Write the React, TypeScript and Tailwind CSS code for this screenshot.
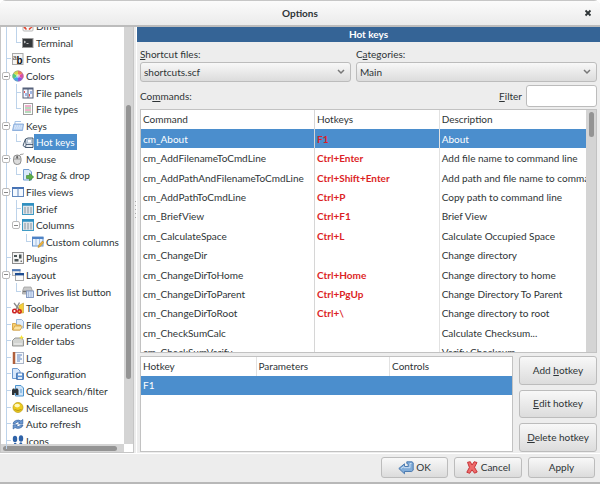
import { useState } from "react";
import type { ReactNode } from "react";
import clsx from "clsx";

/* 12x12 drawings for the tree */
const icons: Record<string, ReactNode> = {
  differ: (
    <>
      <rect x="1" y="1" width="10" height="10" rx="1" fill="#fafafa" stroke="#b9b9b9" />
      <path d="M4.5 5.5L2.5 7.5l2 2M7 5l2.5 2L7 9.500" fill="none" stroke="#e0452f" strokeWidth="1.600" />
    </>
  ),
  terminal: (
    <>
      <rect x="0.5" y="1.5" width="10.500" height="9" fill="#34373a" stroke="#9a9a9a" />
      <path d="M2 4l1.500 1L2 6" fill="none" stroke="#fff" strokeWidth="0.8" />
      <path d="M4.500 6.500h2" stroke="#ddd" strokeWidth="0.8" />
    </>
  ),
  fonts: (
    <>
      <rect x="0.5" y="0.5" width="10.500" height="11" fill="#f6f6f6" stroke="#a9a9a9" />
      <text x="0.800" y="6.500" fontSize="7" fill="#444" fontFamily="Liberation Sans, sans-serif">a</text>
      <text x="4.500" y="10.500" fontSize="10" fontWeight="bold" fill="#111" fontFamily="Liberation Sans, sans-serif">b</text>
    </>
  ),
  colors: (
    <>
      <path d="M6 6V.5A5.500 5.500 0 0 1 10.800 3.200z" fill="#ef7d5a" />
      <path d="M6 6l4.800-2.800A5.500 5.500 0 0 1 10.800 8.800z" fill="#e24ba0" />
      <path d="M6 6l4.800 2.800A5.500 5.500 0 0 1 6 11.500z" fill="#8a55e0" />
      <path d="M6 6v5.500A5.500 5.500 0 0 1 1.200 8.800z" fill="#42a5ee" />
      <path d="M6 6L1.200 8.800A5.500 5.500 0 0 1 1.200 3.200z" fill="#4fcf7a" />
      <path d="M6 6L1.200 3.200A5.500 5.500 0 0 1 6 .5z" fill="#d5d84a" />
      <circle cx="6" cy="6" r="2" fill="#fff" opacity="0.5" />
      <circle cx="6" cy="6" r="5.200" fill="none" stroke="#8f8f9f" strokeWidth="0.5" />
    </>
  ),
  panels: (
    <>
      <rect x="0.500" y="0.500" width="11" height="11" fill="#55607a" />
      <rect x="1.500" y="2.500" width="4" height="8" fill="#f4f6ff" />
      <rect x="6.500" y="2.500" width="4" height="8" fill="#f4f6ff" />
      <path d="M2.500 4v2M7.500 7v2.500" stroke="#e05050" />
      <path d="M4 6v3M9 4v3" stroke="#4a76c9" />
    </>
  ),
  types: (
    <>
      <rect x="1.500" y="0.500" width="9" height="11" fill="#fcfcfc" stroke="#9d9d9d" />
      <path d="M3 3h6M3 7h6" stroke="#e0609a" />
      <path d="M3 5h6M3 9h6" stroke="#6fb97a" />
    </>
  ),
  keys: (
    <>
      <path d="M3 4V1.500h6" fill="none" stroke="#a8c4e6" />
      <path d="M2 4h9.500l-1 6.500H.5z" fill="#b4cef0" stroke="#7ba2d4" strokeWidth="0.8" />
      <path d="M2.500 6h8M2 8h8" stroke="#f1f7ff" strokeDasharray="1.500 0.600" />
    </>
  ),
  hotkeys: (
    <>
      <path d="M3.500 3L1 9.500l2.500 2h7.500V2H6z" fill="#e9eef5" stroke="#33475f" strokeWidth="0.900" />
      <path d="M3.500 3L4 8.500l-.5 3M4 8.500h7" fill="none" stroke="#33475f" strokeWidth="0.800" />
      <path d="M5.500 3.500h4v3.500h-4z" fill="#fff" stroke="#8ba2bd" strokeWidth="0.600" />
    </>
  ),
  mouse: (
    <>
      <path d="M7.500 2.500C8.500.5 10 2 11.500.8" fill="none" stroke="#8b8b8b" />
      <rect x="1.500" y="2" width="7.500" height="9.500" rx="3.500" fill="#dcdcdc" stroke="#777" strokeWidth="0.800" />
      <path d="M2 6h6.500M5.200 2v4" stroke="#888" strokeWidth="0.800" />
      <rect x="4.200" y="3" width="2" height="2.500" rx="1" fill="#666" />
    </>
  ),
  drag: (
    <>
      <path d="M1.500.5h5.500l2.500 2.500v8h-8z" fill="#d9e9fb" stroke="#6f9cd0" />
      <path d="M4.500 6.500h3V4.300l4.200 3.700-4.200 3.700V9.500h-3z" fill="#5db04a" stroke="#357f2a" strokeWidth="0.600" />
    </>
  ),
  views: (
    <>
      <rect x="0.500" y="1.500" width="11" height="9" fill="#f4f9ff" stroke="#6288bd" />
      <path d="M0 2h12" stroke="#4672b4" strokeWidth="2" />
      <path d="M6 2v9" stroke="#6288bd" />
    </>
  ),
  brief: (
    <>
      <rect x="0.500" y="0.500" width="11" height="11" fill="#dfe5ea" stroke="#409bc4" />
      <path d="M0 1.500h12" stroke="#2f8fc0" strokeWidth="2.500" />
      <path d="M3 4v6.500M6 4v6.500M9 4v6.500" stroke="#84929d" />
    </>
  ),
  custom: (
    <>
      <rect x="0.500" y="1" width="10.500" height="9" fill="#e9f2fd" stroke="#6794cb" />
      <path d="M0 2h11.500" stroke="#4e83c6" strokeWidth="2" />
      <path d="M4 3v7M7.500 3v7" stroke="#a2bfe2" />
      <path d="M6 11.500l.8-2.500L10.500 5l1.300 1.500L8 10.800z" fill="#edb43c" stroke="#b07b1d" strokeWidth="0.500" />
    </>
  ),
  plugins: (
    <>
      <rect x="0.500" y="0.500" width="11" height="11" fill="#f3f3f3" stroke="#8d8d8d" />
      <path d="M2 3h3v2H2zM7 2.500h2.500v4H7zM2.500 7h4v2.500h-4z" fill="#4b5556" />
      <path d="M8.500 8.500h1.500V10H8.500z" fill="#777" />
    </>
  ),
  layout: (
    <>
      <rect x="0.500" y="0.500" width="7.500" height="6" fill="#eee" stroke="#b5b5b5" />
      <path d="M0 1.200h8.500" stroke="#4d79b8" strokeWidth="2" />
      <rect x="3.500" y="4.500" width="8" height="7" fill="#fafafa" stroke="#aaa" />
      <path d="M3 5.200h9" stroke="#1e4d91" strokeWidth="2.400" />
    </>
  ),
  drives: (
    <>
      <path d="M2 1h7l1.500 4v3h-10V5z" fill="#c9c9c9" stroke="#999" strokeWidth="0.700" />
      <path d="M1 5.500h9" stroke="#777" strokeWidth="1.500" />
      <rect x="4.500" y="5" width="7" height="6.500" fill="#d2e0f4" stroke="#7d93bd" strokeWidth="0.900" />
      <path d="M6.500 5v6M9 5v6" stroke="#95a9cf" strokeWidth="0.700" />
    </>
  ),
  toolbar: (
    <>
      <path d="M7 3.500l4.500-2.500v10H6z" fill="#f4cf3c" stroke="#b79520" strokeWidth="0.500" />
      <path d="M2 1l5.500 7M7.500.5L3.500 8" stroke="#888" strokeWidth="1.300" />
      <circle cx="2.500" cy="9" r="1.800" fill="none" stroke="#cc2020" strokeWidth="1.500" />
      <circle cx="7.500" cy="9.500" r="1.700" fill="none" stroke="#cc2020" strokeWidth="1.500" />
    </>
  ),
  fileops: (
    <>
      <path d="M4.500.5h5l2 2V9h-7z" fill="#deebfb" stroke="#7fa4d2" strokeWidth="0.800" />
      <path d="M.5 4.500h3l1 1.500h4l-.5 5H.5z" fill="#f6cf73" stroke="#cf9a34" strokeWidth="0.800" />
      <path d="M.8 11l2-4h7.500l-2 4z" fill="#fbe3a2" stroke="#cf9a34" strokeWidth="0.700" />
    </>
  ),
  tabs: (
    <>
      <path d="M.5 11V5.500L3 3h7l1.500 2.500V11z" fill="#d3d5d2" stroke="#8d8f8c" strokeWidth="0.900" />
      <path d="M2 9h8" stroke="#f2f2f2" />
      <path d="M9.500 0l.8 1.700 1.700.8-1.700.8-.8 1.700-.8-1.700L7 2.500l1.700-.8z" fill="#f4e23c" />
    </>
  ),
  log: (
    <>
      <rect x="2.500" y="0.500" width="9" height="11" fill="#f7f9fc" stroke="#a9b4c6" />
      <path d="M2 0v12" stroke="#b0603c" strokeWidth="2.500" />
      <path d="M5 3h5M5 5h3.500M5 7h5M5 9h3" stroke="#5c82bd" />
    </>
  ),
  config: (
    <>
      <path d="M.5.500h5L8 3v7.500H.5z" fill="#d7e7fa" stroke="#6b98ce" />
      <rect x="4.500" y="5" width="7" height="6.500" rx="0.500" fill="#5d93d3" stroke="#3d6ba8" strokeWidth="0.800" />
      <rect x="6" y="5.500" width="4" height="2" fill="#fff" />
      <rect x="6" y="9" width="4" height="2" fill="#dfe9f5" />
    </>
  ),
  quick: (
    <>
      <path d="M3.500.500h5.500l2.500 2.500v8h-8z" fill="#cfe4f8" stroke="#4d95cf" />
      <path d="M0 5l1-1.500h1.500L3 5l1-1.500h1.500L6.500 5v5H4V8H2.500v2H0z" fill="#2d3439" />
      <path d="M8 5h2M8 7h2" stroke="#5c9bd0" />
    </>
  ),
  misc: (
    <>
      <circle cx="6" cy="5.500" r="5" fill="#ecca1e" stroke="#b99a12" strokeWidth="0.700" />
      <ellipse cx="5.200" cy="3.600" rx="2.800" ry="1.800" fill="#fff8bd" />
      <path d="M2.500 7.500q3.500 2 7 0" fill="none" stroke="#a98b10" strokeWidth="0.800" />
    </>
  ),
  refresh: (
    <>
      <path d="M1 5.500A5 4 0 0 1 9 3l1.800-1.500v4.300H6.500L8 4.500A3.500 3 0 0 0 3.200 5.500z" fill="#6d9ad2" stroke="#2f5f9f" strokeWidth="0.700" />
      <path d="M11 7A5 4 0 0 1 3 9.500L1.200 11V6.800h4.300L4 8A3.500 3 0 0 0 8.800 7z" fill="#6d9ad2" stroke="#2f5f9f" strokeWidth="0.700" />
    </>
  ),
  feet: (
    <>
      <ellipse cx="3" cy="4" rx="2.200" ry="3.300" fill="#2f63a8" />
      <ellipse cx="3.200" cy="9.500" rx="1.500" ry="1.800" fill="#2f63a8" />
      <ellipse cx="9" cy="3.500" rx="2.200" ry="3.200" fill="#2f63a8" />
      <ellipse cx="8.800" cy="9" rx="1.500" ry="1.800" fill="#2f63a8" />
    </>
  ),
};

type Node = {
  label: string;
  icon: string;
  level: number;
  last?: boolean;
  open?: boolean;
};

const nodes: Node[] = [
  { label: "Differ", icon: "differ", level: 1 },
  { label: "Terminal", icon: "terminal", level: 1, last: true },
  { label: "Fonts", icon: "fonts", level: 0 },
  { label: "Colors", icon: "colors", level: 0, open: true },
  { label: "File panels", icon: "panels", level: 1 },
  { label: "File types", icon: "types", level: 1, last: true },
  { label: "Keys", icon: "keys", level: 0, open: true },
  { label: "Hot keys", icon: "hotkeys", level: 1, last: true },
  { label: "Mouse", icon: "mouse", level: 0, open: true },
  { label: "Drag & drop", icon: "drag", level: 1, last: true },
  { label: "Files views", icon: "views", level: 0, open: true },
  { label: "Brief", icon: "brief", level: 1 },
  { label: "Columns", icon: "brief", level: 1, last: true, open: true },
  { label: "Custom columns", icon: "custom", level: 2, last: true },
  { label: "Plugins", icon: "plugins", level: 0 },
  { label: "Layout", icon: "layout", level: 0, open: true },
  { label: "Drives list button", icon: "drives", level: 1, last: true },
  { label: "Toolbar", icon: "toolbar", level: 0 },
  { label: "File operations", icon: "fileops", level: 0 },
  { label: "Folder tabs", icon: "tabs", level: 0 },
  { label: "Log", icon: "log", level: 0 },
  { label: "Configuration", icon: "config", level: 0 },
  { label: "Quick search/filter", icon: "quick", level: 0 },
  { label: "Miscellaneous", icon: "misc", level: 0 },
  { label: "Auto refresh", icon: "refresh", level: 0 },
  { label: "Icons", icon: "feet", level: 0 },
];

const commands = [
  ["cm_About", "F1", "About"],
  ["cm_AddFilenameToCmdLine", "Ctrl+Enter", "Add file name to command line"],
  ["cm_AddPathAndFilenameToCmdLine", "Ctrl+Shift+Enter", "Add path and file name to command line"],
  ["cm_AddPathToCmdLine", "Ctrl+P", "Copy path to command line"],
  ["cm_BriefView", "Ctrl+F1", "Brief View"],
  ["cm_CalculateSpace", "Ctrl+L", "Calculate Occupied Space"],
  ["cm_ChangeDir", "", "Change directory"],
  ["cm_ChangeDirToHome", "Ctrl+Home", "Change directory to home"],
  ["cm_ChangeDirToParent", "Ctrl+PgUp", "Change Directory To Parent"],
  ["cm_ChangeDirToRoot", "Ctrl+\\", "Change directory to root"],
  ["cm_CheckSumCalc", "", "Calculate Checksum..."],
  ["cm_CheckSumVerify", "", "Verify Checksum"],
];

const buttonClass =
  "flex items-center justify-center rounded-[3px] border border-[#bcbcbc] bg-gradient-to-b from-[#f8f8f8] to-[#dcdcdc] whitespace-nowrap";

function TreeRow({ node, selected, onSelect }: { node: Node; selected: boolean; onSelect: () => void }) {
  const cells = Array.from({ length: node.level + 1 }, (_, i) => i);

  return (
    <li role="treeitem" aria-selected={selected} className="flex min-h-0 items-center">
      {cells.map((i) => {
        const own = i === node.level;
        const line = own || i === 0;
        return (
          <span key={i} className="relative grid w-[10px] shrink-0 grid-rows-2 self-stretch pl-[5px]">
            <span className={clsx(line && "border-l border-[#bdd3ea]", own && "border-b")} />
            <span className={clsx(line && !(own && node.last) && "border-l border-[#bdd3ea]")} />
            {own && node.open && (
              <button
                aria-label={`Collapse ${node.label}`}
                className="absolute inset-0 m-auto flex size-2 items-center justify-center rounded-[2px] border border-[#bababa] bg-white"
              >
                <span className="h-px w-1 bg-[#888]" />
              </button>
            )}
          </span>
        );
      })}
      <svg viewBox="0 0 12 12" className="ml-px size-3 shrink-0">
        {icons[node.icon]}
      </svg>
      <button
        onClick={onSelect}
        className={clsx("h-4 px-[2px] leading-4 whitespace-nowrap", selected && "bg-[#4b8ecd] text-white")}
      >
        {node.label}
      </button>
    </li>
  );
}

function Combo({ id, label, value }: { id: string; label: ReactNode; value: string }) {
  return (
    <div className="flex flex-col">
      <label htmlFor={id} className="h-4 leading-4">
        {label}
      </label>
      <div className="relative">
        <select
          id={id}
          className="h-5 w-full appearance-none rounded-[3px] border border-[#bcbcbc] bg-gradient-to-b from-[#f8f8f8] to-[#dcdcdc] px-[3px] outline-none"
        >
          <option>{value}</option>
        </select>
        <svg viewBox="0 0 8 6" className="pointer-events-none absolute top-[7px] right-[6px] h-[6px] w-2">
          <path d="M1 1l3 3 3-3" fill="none" stroke="#777" strokeWidth="1.500" />
        </svg>
      </div>
    </div>
  );
}

export default function App() {
  const [page, setPage] = useState("Hot keys");
  const [command, setCommand] = useState("cm_About");
  const [filter, setFilter] = useState("");

  const rows = commands.filter(([name]) => name.toLowerCase().includes(filter.toLowerCase()));

  return (
    <div className="bg-white">
      <div className="flex h-screen w-full flex-col overflow-hidden rounded-t-md border-b-2 border-[#b8b8b8] bg-[#ededed] font-['Lato','Open_Sans',sans-serif] text-[10px] text-[#2e3436]">
        {/* Title bar */}
        <header className="grid h-[27px] shrink-0 grid-cols-[1fr_auto_1fr] items-center border-t border-b-2 border-t-[#c6c6c6] border-b-[#bcbcbc] bg-gradient-to-b from-[#fbfbfb] to-[#ebebeb]">
          <h1 className="col-start-2 font-bold">Options</h1>
          <button aria-label="Close" className="mr-2 justify-self-end">
            <svg viewBox="0 0 8 8" className="size-2">
              <path d="M1.500 1.500l5 5M6.500 1.500l-5 5" stroke="#2e3436" strokeWidth="1.800" />
            </svg>
          </button>
        </header>

        <div className="flex min-h-0 flex-1">
          {/* Page tree */}
          <nav className="flex w-[134px] shrink-0 flex-col overflow-hidden border-r border-b border-l border-[#c6c6c6] bg-white">
            <div className="flex min-h-0 flex-1">
              <ul role="tree" className="-mt-[9px] grid h-[431px] min-w-0 flex-1 auto-rows-fr overflow-hidden">
                {nodes.map((node) => (
                  <TreeRow
                    key={node.label}
                    node={node}
                    selected={node.label === page}
                    onSelect={() => setPage(node.label)}
                  />
                ))}
              </ul>
              <div className="flex w-[9px] shrink-0 flex-col items-center bg-[#d4d4d4] pt-[78px] pb-[65px]">
                <div className="w-[5px] flex-1 rounded-full bg-[#949494]" />
              </div>
            </div>
            <div className="flex h-2 shrink-0 items-center">
              <div className="flex h-2 flex-1 items-center bg-[#d4d4d4] pr-[7px] pl-[2px]">
                <div className="h-[5px] flex-1 rounded-full bg-[#949494]" />
              </div>
              <div className="w-[9px]" />
            </div>
          </nav>

          {/* Splitter */}
          <div className="flex w-[3px] shrink-0 cursor-col-resize flex-col items-center justify-center gap-[3px] border-r border-white pb-[62px]">
            {[0, 1, 2, 3, 4].map((i) => (
              <span key={i} className="size-px bg-[#aaa]" />
            ))}
          </div>

          <main className="flex min-w-0 flex-1 flex-col">
            <h2 className="h-[15px] shrink-0 bg-[#356496] text-center leading-[15px] font-bold text-white">Hot keys</h2>

            <div className="flex min-h-0 flex-1 flex-col px-[3px] pt-1 pb-px">
              <div className="grid shrink-0 grid-cols-[7fr_8fr] gap-[5px]">
                <Combo id="files" label={<><u>S</u>hortcut files:</>} value="shortcuts.scf" />
                <Combo id="categories" label={<>C<u>a</u>tegories:</>} value="Main" />
              </div>

              <div className="flex shrink-0 items-center justify-between pt-[3px] pb-[2px]">
                <span>
                  Co<u>m</u>mands:
                </span>
                <div className="flex items-center gap-1">
                  <label htmlFor="filter">
                    <u>F</u>ilter
                  </label>
                  <input
                    id="filter"
                    type="text"
                    value={filter}
                    onChange={(e) => setFilter(e.target.value)}
                    className="h-[22px] w-[71px] rounded-[3px] border border-[#bcbcbc] bg-white px-1 outline-none"
                  />
                </div>
              </div>

              {/* Commands */}
              <div className="flex min-h-0 flex-1 overflow-hidden border border-[#c2c2c2] bg-white">
                <div className="min-w-0 flex-1 overflow-hidden">
                  <table className="h-[252px] w-full table-fixed text-left leading-4">
                    <thead className="leading-[19px]">
                      <tr>
                        <th className="w-[39%] px-[2px] font-normal">Command</th>
                        <th className="w-[28%] border-l border-[#d6d6d6] px-[2px] font-normal">Hotkeys</th>
                        <th className="border-l border-[#e2e2e2] px-[2px] font-normal">Description</th>
                      </tr>
                    </thead>
                    <tbody>
                      {rows.map(([name, keys, description]) => (
                        <tr
                          key={name}
                          onClick={() => setCommand(name)}
                          className={clsx("whitespace-nowrap", name === command && "bg-[#4b8ecd] text-white")}
                        >
                          <td className="px-[2px]">{name}</td>
                          <td className="border-l border-[#d6d6d6] px-[2px] font-bold text-[#dc1f26]">{keys}</td>
                          <td className="overflow-hidden border-l border-[#e2e2e2] px-[2px]">{description}</td>
                        </tr>
                      ))}
                    </tbody>
                  </table>
                </div>
                <div className="flex w-[10px] shrink-0 justify-center bg-[#d4d4d4] pt-[2px]">
                  <div className="h-[25px] w-[5px] rounded-full bg-[#949494]" />
                </div>
              </div>

              {/* Hotkeys of the command */}
              <div className="mt-[3px] flex h-24 shrink-0 gap-[6px]">
                <div className="min-w-0 flex-1 border border-[#c2c2c2] bg-white">
                  <table className="w-full table-fixed text-left leading-[19px]">
                    <thead>
                      <tr>
                        <th className="w-[31%] px-[2px] font-normal">Hotkey</th>
                        <th className="w-[36%] border-l border-[#e2e2e2] px-[2px] font-normal">Parameters</th>
                        <th className="border-l border-[#e2e2e2] px-[2px] font-normal">Controls</th>
                      </tr>
                    </thead>
                    <tbody>
                      <tr className="bg-[#4b8ecd] text-white">
                        <td className="px-[2px]">F1</td>
                        <td />
                        <td />
                      </tr>
                    </tbody>
                  </table>
                </div>
                <div className="grid w-[78px] shrink-0 grid-rows-3 gap-[5px]">
                  <button className={buttonClass}>Add&nbsp;<u>h</u>otkey</button>
                  <button className={buttonClass}><u>E</u>dit hotkey</button>
                  <button className={buttonClass}><u>D</u>elete hotkey</button>
                </div>
              </div>
            </div>
          </main>
        </div>

        {/* Dialog buttons */}
        <footer className="flex shrink-0 justify-end gap-[6px] border-t border-white pt-[3px] pr-[5px] pb-1">
          <button className={clsx(buttonClass, "h-[21px] w-[67px] gap-[2px]")}>
            <svg viewBox="0 0 16 14" className="h-[14px] w-4">
              <path
                d="M.8 7.500L6.500 2.800v2.700h3.700V3.200L8.800 2.500V.8h5.200l1.200 1v7.400l-1.500 1.300H6.500v2.300z"
                fill="#82add9"
                stroke="#4273ab"
                strokeWidth="0.900"
              />
              <path d="M3 7.500l3-2v1.200h6V2.500h1.500" fill="none" stroke="#cfe2f5" strokeWidth="0.900" />
            </svg>
            OK
          </button>
          <button className={clsx(buttonClass, "h-[21px] w-[68px] gap-[3px]")}>
            <svg viewBox="0 0 12 13" className="h-[13px] w-3">
              <path
                d="M1.500 1.300l2.800-.6L6 4l2.200-3.300 2.800.8-2.500 4.800 2.700 4.700-2.700 1.200L6 8.800l-2.300 3.500-2.900-1 2.600-4.900z"
                fill="#ee6b6b"
                stroke="#c22a2f"
                strokeWidth="0.900"
                strokeLinejoin="round"
              />
            </svg>
            Cancel
          </button>
          <button className={clsx(buttonClass, "h-[21px] w-[67px]")}>Apply</button>
        </footer>
      </div>
    </div>
  );
}
